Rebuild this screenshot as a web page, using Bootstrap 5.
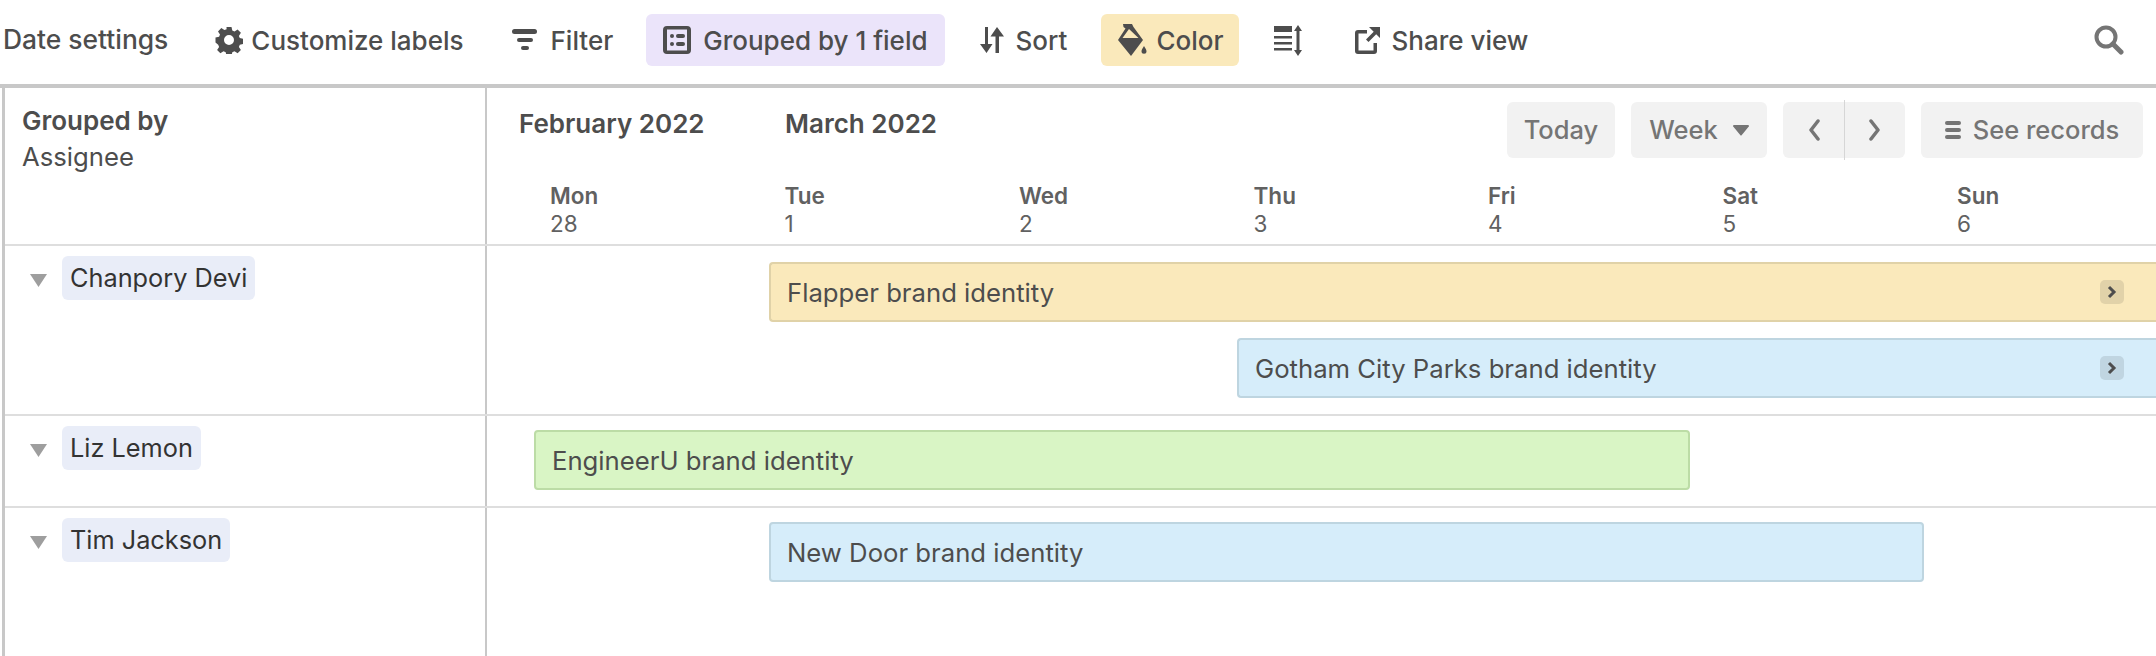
<!DOCTYPE html>
<html lang="en">
<head>
<meta charset="utf-8">
<title>Timeline</title>
<link href="https://cdn.jsdelivr.net/npm/bootstrap@5.3.0/dist/css/bootstrap.min.css" rel="stylesheet">
<style>
html,body{height:100%;}
body{font-family:Inter,"Liberation Sans",sans-serif;font-size:25.7px;color:#4d4d4d;overflow:hidden;background:#fff;}
.page{height:656px;width:2156px;}
.tbar{height:88px;border-bottom:4px solid #c8c8c8;padding:0 32px 4px 3px;}
.tool{height:52px;border-radius:6px;font-weight:500;font-size:26px;white-space:nowrap;color:#4d4d4d;gap:12px;}
.tool svg{fill:#4d4d4d;flex:none;}
.tool-date{font-size:26.400px;}
.tool-purple{background:#ebe4fa;}
.tool-yellow{background:#fae9bb;gap:9px;}
.m-gear{margin-left:47px;gap:8px;}
.m-filter{margin-left:48px;gap:14px;}
.m-group{margin-left:33px;padding:0 17px 0 17px;}
.m-sort{margin-left:35px;}
.m-color{margin-left:34px;padding:0 16px;}
.m-rows{margin-left:35px;}
.m-share{margin-left:53px;gap:11px;}
.main{border-left:3px solid #c8c8c8;margin-left:2px;}
.leftcell{width:482px;flex:none;border-right:2px solid #c8c8c8;}
.rightcell{min-width:0;}
.headrow{height:158px;border-bottom:2px solid #dedede;}
.gby{padding:15px 0 0 17px;line-height:36px;}
.gby b{font-weight:600;display:block;font-size:26px;}
.months{padding:9px 13px 0 32px;height:75px;}
.month{font-weight:600;font-size:26px;position:relative;top:-7px;}
.m1{width:266px;}
.mini{height:56px;background:#f2f2f2;border:0;border-radius:6px;color:#757575;font-size:25.500px;font-weight:500;padding:0;margin-left:16px;}
.mini-today{width:108px;}
.mini-week{width:136px;gap:15px;}
.mini-nav{width:122px;position:relative;}
.mini-nav i{position:absolute;left:61px;top:-2px;bottom:-2px;width:1px;background:#d6d6d6;}
.mini-nav span{flex:1;}
.mini-rec{width:222px;gap:12px;}
.mini svg{fill:#757575;flex:none;}
.daycol{width:234.5px;flex:none;font-size:22.500px;line-height:28px;color:#616161;}
.days{padding:19px 0 0 63px;}
.daycol b{display:block;font-weight:600;}
.group-a{height:170px;}
.group-a .track{padding-top:16px;}
.group-b{height:92px;}
.group-row{border-bottom:2px solid #dedede;}
.tri{flex:none;margin:6px 14px 0 0;}
.person{background:#e9edf8;border-radius:6px;height:44px;line-height:44px;padding:0 8px;color:#333;white-space:nowrap;font-size:25.300px;}
.lefti{padding:10px 0 0 24px;}
.bar{height:60px;border:2px solid;border-radius:4px;padding:2px 16px 0;color:#4d4d4d;white-space:nowrap;}
.bar-open{border-right:0;border-radius:4px 0 0 4px;padding-right:32px;}
.bar-y{background:#fae9bb;border-color:#e0d2a8;}
.bar-b{background:#d6edfa;border-color:#bed5e0;}
.bar-g{background:#d9f5c5;border-color:#bcdca6;}
.more{width:24px;height:24px;border-radius:5px;margin-top:-2px;}
.more-y{background:#e1d2a9;}
.more-b{background:#c0d5e1;}
.track{padding-top:14px;}
.track .bar + .bar{margin-top:16px;}
.ms-bar1{margin-left:282px;}
.ms-bar2{margin-left:750px;}
.ms-bar3{margin-left:47px;width:1156px;}
.ms-bar4{margin-left:282px;width:1155px;}
</style>
</head>
<body>
<div class="page d-flex flex-column">
  <div class="tbar d-flex align-items-center">
    <div class="tool tool-date d-flex align-items-center">Date settings</div>
    <div class="tool m-gear d-flex align-items-center">
      <svg width="28" height="28" viewBox="0 0 28 28"><path fill-rule="evenodd" d="M11.500 1h5l.8 3.600 2.200.9 3.100-2 3.300 3.300-2 3.100.9 2.200 3.600.800v5l-3.600.8-.9 2.200 2 3.100-3.300 3.300-3.100-2-2.200.9-.8 3.600h-5l-.8-3.600-2.200-.9-3.100 2-3.300-3.300 2-3.100-.9-2.200L.5 16.500v-5l3.600-.8.9-2.200-2-3.100 3.300-3.300 3.100 2 2.200-.9zM14 9a5 5 0 1 0 0 10A5 5 0 0 0 14 9z"/></svg>
      Customize labels
    </div>
    <div class="tool m-filter d-flex align-items-center">
      <svg width="25" height="24" viewBox="0 0 25 24"><rect x="0" y="1" width="25" height="5" rx="2.500"/><rect x="5" y="10" width="16" height="4" rx="2"/><rect x="9" y="18" width="8" height="4" rx="2"/></svg>
      Filter
    </div>
    <div class="tool tool-purple m-group d-flex align-items-center">
      <svg width="28" height="28" viewBox="0 0 28 28"><path fill-rule="evenodd" d="M4 0h20a4 4 0 0 1 4 4v20a4 4 0 0 1-4 4H4a4 4 0 0 1-4-4V4a4 4 0 0 1 4-4zm0 3.500v21h20v-21z"/><rect x="7" y="8" width="4" height="4" rx="2"/><rect x="7" y="16" width="4" height="4" rx="2"/><rect x="13" y="8" width="9" height="4" rx="2"/><rect x="13" y="16" width="9" height="4" rx="2"/></svg>
      Grouped by 1 field
    </div>
    <div class="tool m-sort d-flex align-items-center">
      <svg width="24" height="28" viewBox="0 0 24 28"><path d="M5 1h3v17h4.500L6.500 27 0 18h5zM17 1l7 9.500h-5V27h-3.500V10.500H10.500z"/></svg>
      Sort
    </div>
    <div class="tool tool-yellow m-color d-flex align-items-center">
      <svg width="30" height="34" viewBox="0 0 30 34"><path fill-rule="evenodd" d="M6 1h9l1.500 3L26 17 14 33 1 17 8.500 5.500 6.500 4zM12 6l-6.500 9h16z"/><path d="M27 23c1.500 2.400 2.500 3.800 2.500 5.200a2.500 2.500 0 0 1-5 0c0-1.400 1-2.800 2.500-5.200z"/></svg>
      Color
    </div>
    <div class="tool m-rows d-flex align-items-center">
      <svg width="28" height="32" viewBox="0 0 28 32"><rect x="0" y="2" width="18" height="6"/><rect x="0" y="12" width="18" height="2.500"/><rect x="0" y="18" width="18" height="2.500"/><rect x="0" y="24" width="18" height="2.500"/><path d="M24 1l4 6h-2.500v19H28l-4 6-4-6h2.500V7H20z"/></svg>
    </div>
    <div class="tool m-share d-flex align-items-center">
      <svg width="25" height="28" viewBox="0 0 25 28"><path d="M3 4h9v3.500H3.500v17h15V17H22v8a3 3 0 0 1-3 3H3a3 3 0 0 1-3-3V7a3 3 0 0 1 3-3z"/><path d="M14 1h11v11l-3.800-3.800-7.700 7.800-2.500-2.500 7.700-7.800z"/></svg>
      Share view
    </div>
    <div class="ms-auto d-flex">
      <svg width="30" height="30" viewBox="0 0 30 30"><circle cx="12" cy="12" r="9.500" fill="none" stroke="#757575" stroke-width="4"/><path d="M19 19l8 8" stroke="#757575" stroke-width="5" stroke-linecap="round"/></svg>
    </div>
  </div>

  <div class="main d-flex flex-column flex-grow-1">
    <div class="headrow d-flex">
      <div class="leftcell gby"><b>Grouped by</b>Assignee</div>
      <div class="rightcell flex-grow-1">
        <div class="d-flex months align-items-center">
          <div class="month m1">February 2022</div>
          <div class="month">March 2022</div>
          <div class="ms-auto d-flex">
            <button class="mini mini-today d-flex align-items-center justify-content-center">Today</button>
            <button class="mini mini-week d-flex align-items-center justify-content-center">Week
              <svg width="16" height="12" viewBox="0 0 16 12"><path d="M1 1h14a1 1 0 0 1 .8 1.600L8.800 11a1 1 0 0 1-1.600 0L.2 2.600A1 1 0 0 1 1 1z"/></svg></button>
            <div class="mini mini-nav d-flex align-items-center text-center">
              <span class="d-flex justify-content-center"><svg width="12" height="22" viewBox="0 0 12 22"><path d="M10 2L3 11l7 9" fill="none" stroke="#757575" stroke-width="3.500" stroke-linecap="round" stroke-linejoin="round"/></svg></span>
              <i></i>
              <span class="d-flex justify-content-center"><svg width="12" height="22" viewBox="0 0 12 22"><path d="M2 2l7 9-7 9" fill="none" stroke="#757575" stroke-width="3.500" stroke-linecap="round" stroke-linejoin="round"/></svg></span>
            </div>
            <button class="mini mini-rec d-flex align-items-center justify-content-center"><svg width="16" height="20" viewBox="0 0 16 20"><rect y="1" width="16" height="4" rx="2"/><rect y="8" width="16" height="4" rx="2"/><rect y="15" width="16" height="4" rx="2"/></svg>See records</button>
          </div>
        </div>
        <div class="d-flex days">
          <div class="daycol"><b>Mon</b>28</div>
          <div class="daycol"><b>Tue</b>1</div>
          <div class="daycol"><b>Wed</b>2</div>
          <div class="daycol"><b>Thu</b>3</div>
          <div class="daycol"><b>Fri</b>4</div>
          <div class="daycol"><b>Sat</b>5</div>
          <div class="daycol"><b>Sun</b>6</div>
        </div>
      </div>
    </div>

    <div class="d-flex group-row group-a">
      <div class="leftcell lefti d-flex align-items-start">
        <svg class="tri" width="19" height="34" viewBox="0 0 19 34"><path d="M1 12h17l-8.500 13z" fill="#9e9e9e"/></svg>
        <span class="person">Chanpory Devi</span>
      </div>
      <div class="rightcell flex-grow-1 track">
        <div class="bar bar-y bar-open d-flex align-items-center ms-bar1">Flapper brand identity
          <span class="more more-y ms-auto d-flex align-items-center justify-content-center"><svg width="10" height="14" viewBox="0 0 10 14"><path d="M2 2l5 5-5 5" fill="none" stroke="#4d4d4d" stroke-width="3"/></svg></span></div>
        <div class="bar bar-b bar-open d-flex align-items-center ms-bar2">Gotham City Parks brand identity
          <span class="more more-b ms-auto d-flex align-items-center justify-content-center"><svg width="10" height="14" viewBox="0 0 10 14"><path d="M2 2l5 5-5 5" fill="none" stroke="#4d4d4d" stroke-width="3"/></svg></span></div>
      </div>
    </div>

    <div class="d-flex group-row group-b">
      <div class="leftcell lefti d-flex align-items-start">
        <svg class="tri" width="19" height="34" viewBox="0 0 19 34"><path d="M1 12h17l-8.500 13z" fill="#9e9e9e"/></svg>
        <span class="person">Liz Lemon</span>
      </div>
      <div class="rightcell flex-grow-1 track">
        <div class="bar bar-g d-flex align-items-center ms-bar3">EngineerU brand identity</div>
      </div>
    </div>

    <div class="d-flex flex-grow-1">
      <div class="leftcell lefti d-flex align-items-start">
        <svg class="tri" width="19" height="34" viewBox="0 0 19 34"><path d="M1 12h17l-8.500 13z" fill="#9e9e9e"/></svg>
        <span class="person">Tim Jackson</span>
      </div>
      <div class="rightcell flex-grow-1 track">
        <div class="bar bar-b d-flex align-items-center ms-bar4">New Door brand identity</div>
      </div>
    </div>
  </div>
</div>
<script src="https://cdn.jsdelivr.net/npm/bootstrap@5.3.0/dist/js/bootstrap.bundle.min.js"></script>
</body>
</html>
